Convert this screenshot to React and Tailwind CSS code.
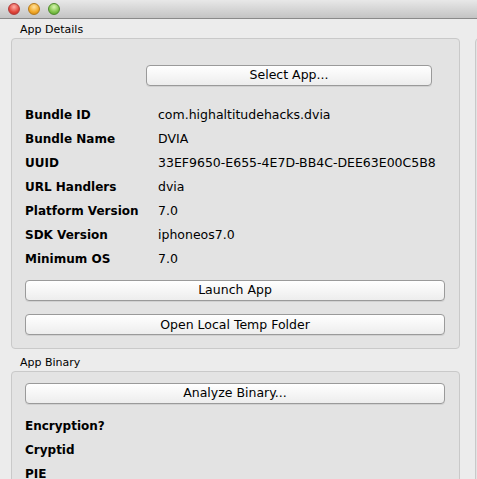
import React from 'react'

const font = { fontFamily: '"DejaVu Sans", "Liberation Sans", sans-serif' }

const MacButton = ({ children, className = '' }) => (
  <button
    className={`h-[21px] rounded-[4px] border border-[#9a9a9a] bg-gradient-to-b from-white to-[#ededed] text-[12.5px] leading-none text-black shadow-[0_1px_0_rgba(0,0,0,0.08)] ${className}`}
  >
    {children}
  </button>
)

const Row = ({ label, value }) => (
  <div className="flex h-[24px] items-center whitespace-nowrap text-black">
    <div className="w-[133px] shrink-0 text-[12px] font-bold">{label}</div>
    <div className="text-[12.5px]">{value}</div>
  </div>
)

const details = [
  ['Bundle ID', 'com.highaltitudehacks.dvia'],
  ['Bundle Name', 'DVIA'],
  ['UUID', '33EF9650-E655-4E7D-BB4C-DEE63E00C5B8'],
  ['URL Handlers', 'dvia'],
  ['Platform Version', '7.0'],
  ['SDK Version', 'iphoneos7.0'],
  ['Minimum OS', '7.0'],
]

const App = () => {
  return (
    <div className="h-[479px] w-[477px] overflow-hidden bg-[#ececec]" style={font}>
      {/* title bar */}
      <div className="flex h-[19px] items-center gap-[8px] border-b border-[#8a8a8a] bg-gradient-to-b from-[#e8e8e8] to-[#c4c4c4] pl-[8px]">
        <span className="h-[12px] w-[12px] rounded-full border border-[#b03b3b] bg-[radial-gradient(circle_at_50%_30%,#ffb0a8,#e0453a_60%,#b92a22)]" />
        <span className="h-[12px] w-[12px] rounded-full border border-[#b57a1a] bg-[radial-gradient(circle_at_50%_30%,#ffe3a0,#f1a827_60%,#c98014)]" />
        <span className="h-[12px] w-[12px] rounded-full border border-[#4f8a2c] bg-[radial-gradient(circle_at_50%_30%,#d8f5b0,#7fc24a_60%,#4e9a26)]" />
      </div>

      <div className="flex">
        <div className="w-[464px] shrink-0">
          <div className="ml-[20px] mt-[4px] text-[11px] leading-[14px] text-black">App Details</div>
          <div className="ml-[11px] mt-[1px] h-[311px] w-[449px] rounded-[4px] border border-[#c9c9c9] bg-[#e3e3e3] px-[13px]">
            <div className="flex justify-end pr-[14px] pt-[26px]">
              <MacButton className="w-[286px]">Select App...</MacButton>
            </div>
            <div className="mt-[17px]">
              {details.map(([l, v]) => (
                <Row key={l} label={l} value={v} />
              ))}
            </div>
            <MacButton className="mt-[9px] w-[420px]">Launch App</MacButton>
            <MacButton className="mt-[13px] w-[420px]">Open Local Temp Folder</MacButton>
          </div>

          <div className="ml-[20px] mt-[7px] text-[11px] leading-[14px] text-black">App Binary</div>
          <div className="ml-[11px] mt-[1px] h-[200px] w-[449px] rounded-[4px] border border-[#c9c9c9] bg-[#e3e3e3] px-[13px]">
            <MacButton className="mt-[11px] w-[420px]">Analyze Binary...</MacButton>
            <div className="mt-[10px]">
              {['Encryption?', 'Cryptid', 'PIE'].map((l) => (
                <Row key={l} label={l} value="" />
              ))}
            </div>
          </div>
        </div>
        <div className="ml-[11px] mt-[19px] h-[500px] w-[20px] shrink-0 rounded-tl-[4px] border border-[#c9c9c9] bg-[#e3e3e3]" />
      </div>
    </div>
  )
}

export default App
